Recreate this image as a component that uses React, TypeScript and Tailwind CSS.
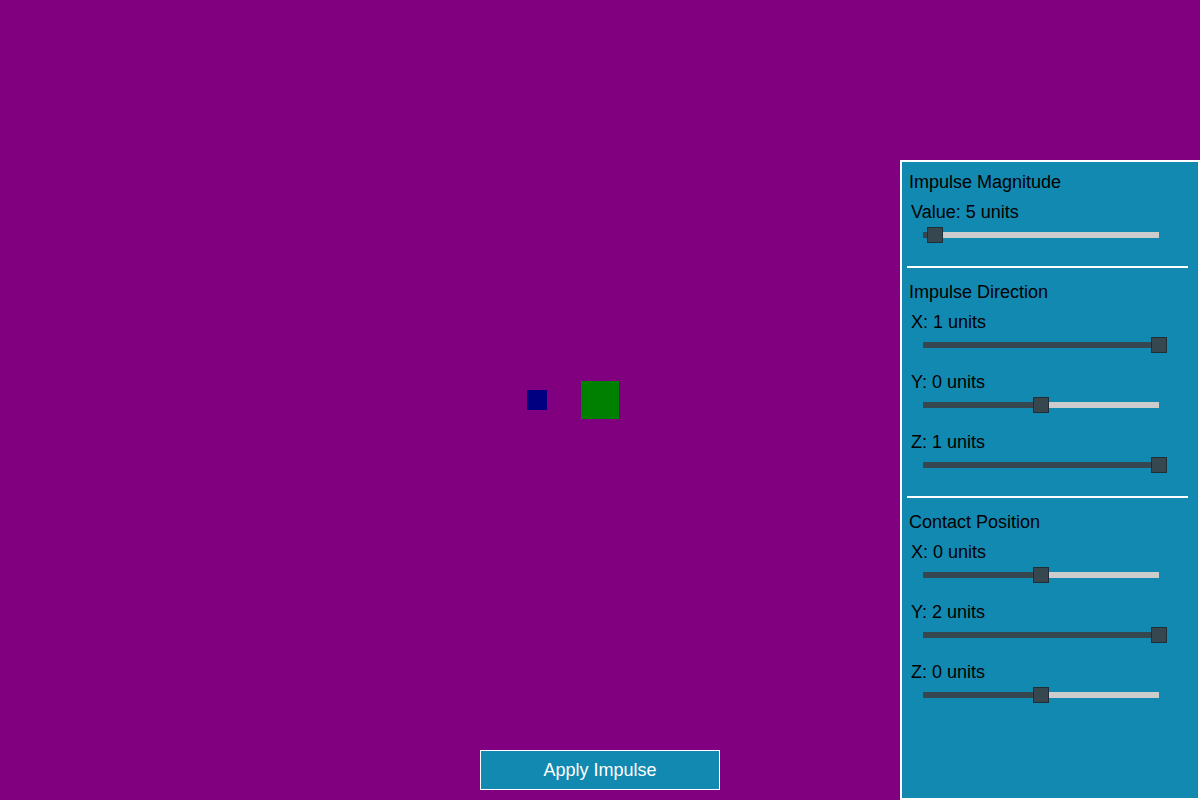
import React from "react";

type SliderProps = { label: string; value: number; min: number; max: number };

function Slider({ label, value, min, max }: SliderProps) {
  const frac = (value - min) / (max - min);
  return (
    <div className="h-[60px]">
      <div className="ml-[4px] h-[20px] leading-[20px] text-[18px] text-black">{label}</div>
      <div className="relative ml-[16px] mt-[10px] h-[6px] w-[236px] bg-[#cccccc]">
        <div className="h-full bg-[#37474f]" style={{ width: `${frac * 100}%` }} />
        <div
          className="absolute top-[-5px] h-[16px] w-[16px] -translate-x-1/2 border border-[#1f2d36] bg-[#37474f]"
          style={{ left: `${frac * 100}%` }}
        />
      </div>
    </div>
  );
}

function Section({
  title,
  children,
  first,
  last,
}: {
  title: string;
  children: React.ReactNode;
  first?: boolean;
  last?: boolean;
}) {
  return (
    <div className={first ? "" : "mt-[14px]"}>
      <div className="ml-[2px] h-[20px] leading-[20px] text-[18px] text-black">{title}</div>
      <div className="mt-[10px]">{children}</div>
      {!last && <div className="mt-[4px] h-[2px] w-[281px] bg-white" />}
    </div>
  );
}

export default function App() {
  return (
    <div
      className="relative h-[800px] w-[1200px] overflow-hidden bg-[#800080]"
      style={{ fontFamily: '"Liberation Sans", Arial, sans-serif' }}
    >
      {/* scene */}
      <div className="flex h-full w-full items-center justify-center">
        <div className="relative h-[38px] w-[38px] bg-[#008000]">
          <div className="absolute left-[-54px] top-[9px] h-[20px] w-[20px] bg-[#000080]" />
        </div>
      </div>

      {/* control panel */}
      <div className="absolute right-0 top-[160px] box-border h-[640px] w-[300px] border-2 border-white bg-[#1289b0] pl-[5px] pt-[10px]">
        <Section title="Impulse Magnitude" first>
          <Slider label="Value: 5 units" value={5} min={0} max={100} />
        </Section>
        <Section title="Impulse Direction">
          <Slider label="X: 1 units" value={1} min={-1} max={1} />
          <Slider label="Y: 0 units" value={0} min={-1} max={1} />
          <Slider label="Z: 1 units" value={1} min={-1} max={1} />
        </Section>
        <Section title="Contact Position" last>
          <Slider label="X: 0 units" value={0} min={-2} max={2} />
          <Slider label="Y: 2 units" value={2} min={-2} max={2} />
          <Slider label="Z: 0 units" value={0} min={-2} max={2} />
        </Section>
      </div>

      {/* apply button */}
      <button className="absolute bottom-[10px] left-[480px] h-[40px] w-[240px] border border-white bg-[#1289b0] text-[18px] text-white">
        Apply Impulse
      </button>
    </div>
  );
}
